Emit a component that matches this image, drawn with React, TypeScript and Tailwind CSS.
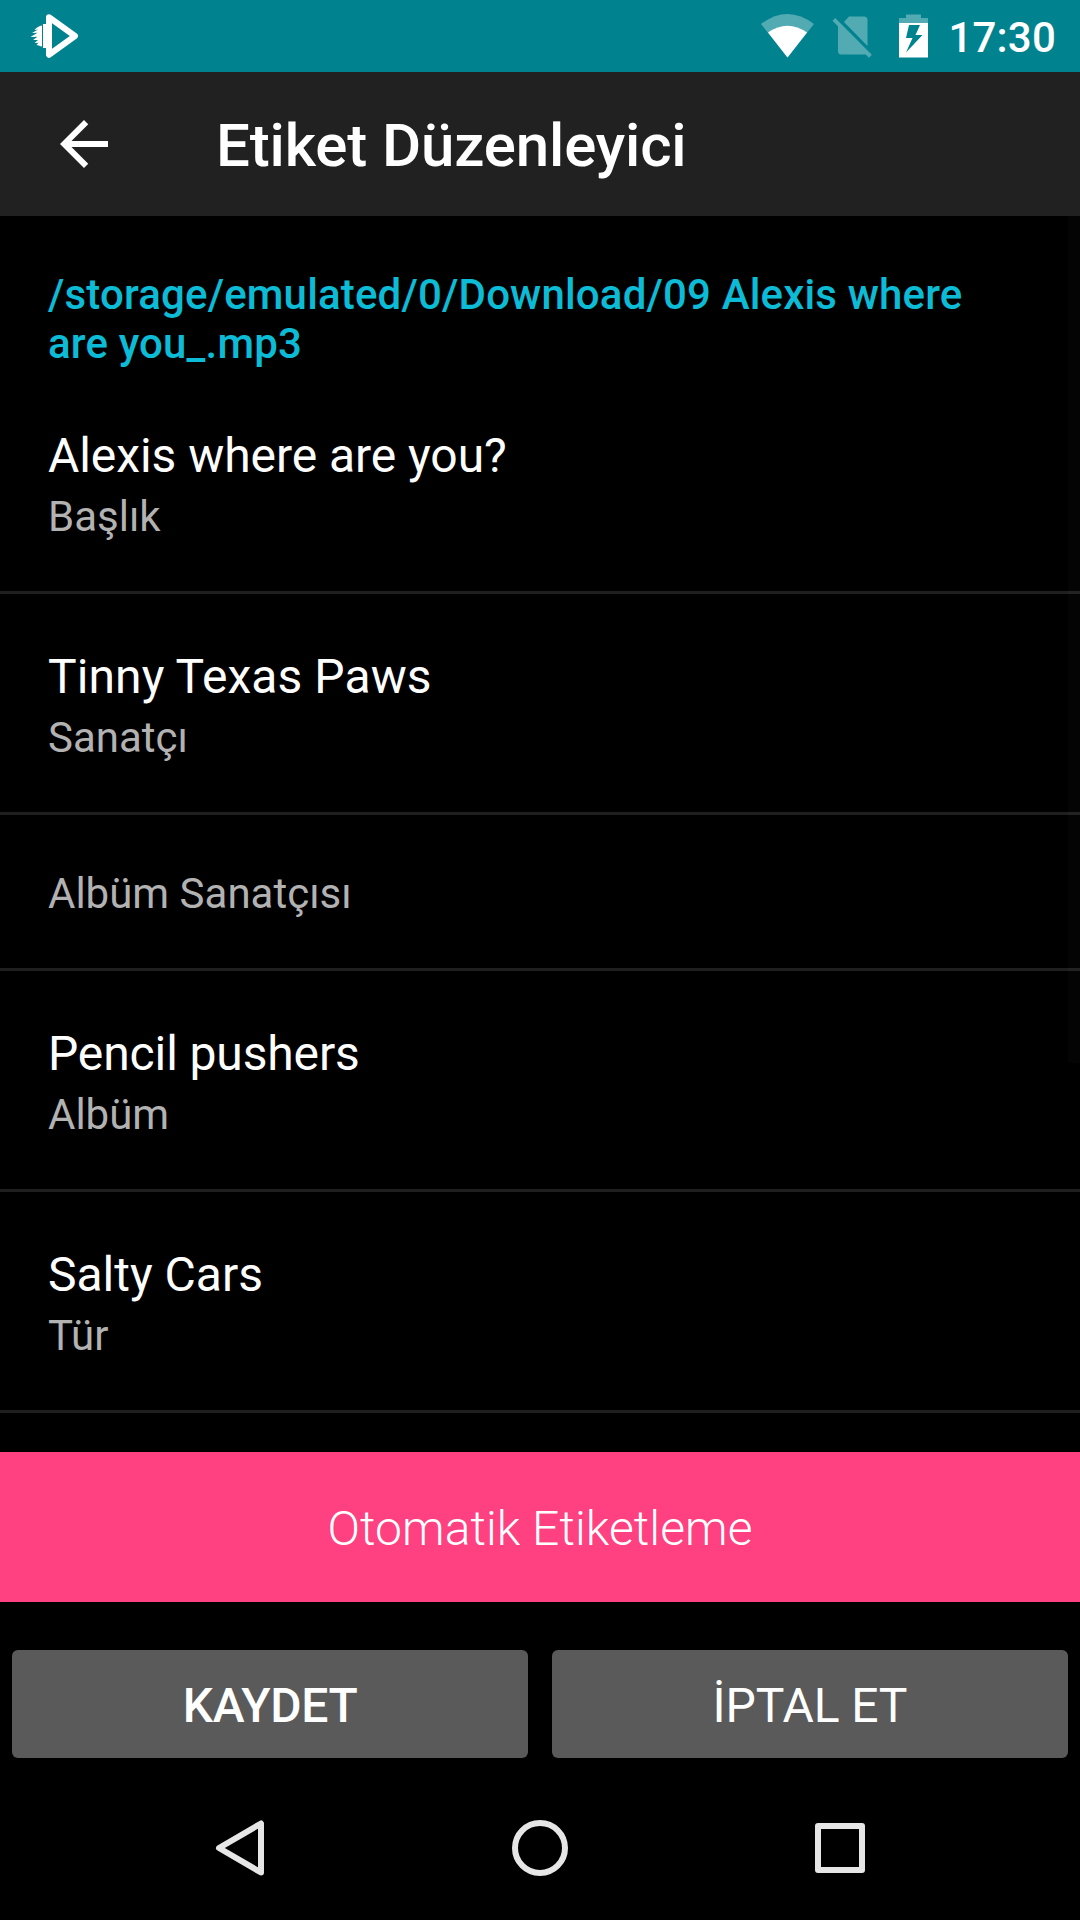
const fields = [
  { value: "Alexis where are you?", label: "Başlık", tracking: "tracking-[-0.06px]" },
  { value: "Tinny Texas Paws", label: "Sanatçı", tracking: "tracking-[0.08px]" },
  { value: "", label: "Albüm Sanatçısı", tracking: "" },
  { value: "Pencil pushers", label: "Albüm", tracking: "tracking-[-0.12px]" },
  { value: "Salty Cars", label: "Tür", tracking: "" },
];

function StatusBar() {
  return (
    <div className="flex h-[72px] shrink-0 items-center justify-between bg-[#00838f] pl-[30px] pr-6">
      <svg width="50" height="46" viewBox="30 13 50 46" fill="#fff">
        <path
          d="M49 17.2 L75 36 L49 54.8 Z"
          fill="none"
          stroke="#fff"
          strokeWidth="6"
          strokeLinejoin="round"
        />
        <path d="M43 24H47V48H43Z" />
        <path d="M42 25.500C39 25.700 36.500 27.500 34.500 30L38 29.500L32 33L37.500 32.800L30.500 37L37.500 36.800L33 40L38 40L34.500 43L38.500 42.800C37.500 43.800 37 44.500 36.500 45C38.500 45.200 40 46.200 42 46.500Z" />
      </svg>
      <div className="flex items-center">
        <svg width="190" height="56" viewBox="756 8 190 56" fill="#fff">
          <path d="M761 24Q787.500 4 814 24L787.500 57.500Z" opacity=".32" />
          <path d="M768 32.500Q787.500 19 807 32.500L787.500 57.500Z" />
          <g opacity=".32">
            <path d="M849 16.500H864Q867.500 16.500 867.500 20V46L844 22Z" />
            <path d="M838 24L868 54.500H841Q838 54.500 838 51Z" />
            <path d="M832.500 20.800L835.200 18L871.800 54.800L869 57.700Z" />
          </g>
          <path d="M906 14.500H921V18H928V23H899V18H906Z" opacity=".32" />
          <path
            fillRule="evenodd"
            d="M899 23H928V57.500H899ZM909 25L906 38H912.500L906 52.500L922.500 35H915.500L920 25Z"
          />
        </svg>
        <span className="ml-[2px] pt-0.5 text-[42px] leading-[49px] font-medium tracking-[0.2px] text-white">
          17:30
        </span>
      </div>
    </div>
  );
}

function Field({ value, label, tracking }: { value: string; label: string; tracking: string }) {
  return (
    <div className={`border-b-[3px] border-[#1f1f1f] px-12 pb-[50px] ${value ? "pt-[55px]" : "pt-[54px]"}`}>
      {value && <div className={`mb-2 text-[48px] leading-[56px] text-white ${tracking}`}>{value}</div>}
      <div className="text-[42px] leading-[49px] text-[#b2b2b2]">{label}</div>
    </div>
  );
}

export default function App() {
  return (
    <div className="flex h-[1920px] w-[1080px] flex-col overflow-hidden bg-black font-['Roboto',sans-serif]">
      <StatusBar />
      <header className="flex h-36 shrink-0 items-center bg-[#212121] pl-[60px]">
        <svg width="48" height="48" viewBox="4 4 16 16" fill="#fff">
          <path d="M20 11H7.830l5.590-5.590L12 4l-8 8 8 8 1.410-1.410L7.830 13H20v-2z" />
        </svg>
        <h1 className="ml-[108px] pt-1 text-[60px] leading-[70px] font-medium tracking-[-0.14px] text-white">
          Etiket Düzenleyici
        </h1>
      </header>
      <main className="relative h-[1236px] shrink-0 overflow-hidden">
        <p className="mt-[54px] mb-[5px] pr-20 pl-12 text-[42px] leading-[49px] font-medium tracking-[0.16px] text-[#0cbcd6]">
          /storage/emulated/0/Download/09 Alexis where are you_.mp3
        </p>
        {fields.map((f) => (
          <Field key={f.label} {...f} />
        ))}
        <div className="absolute top-0 right-0 h-[847px] w-3 bg-white/[0.016]" />
      </main>
      <button className="h-[150px] shrink-0 bg-[#ff4081] pt-[3px] text-[48px] leading-[56px] font-light tracking-[0.06px] text-white">
        Otomatik Etiketleme
      </button>
      <div className="mt-12 grid shrink-0 grid-cols-2 gap-6 px-3 text-[48px] leading-[56px] text-white">
        <button className="h-[108px] rounded-[6px] bg-[#5a5a5b] pt-1 font-medium tracking-[-0.4px]">KAYDET</button>
        <button className="h-[108px] rounded-[6px] bg-[#5a5a5b] pt-1 tracking-[-0.1px]">İPTAL ET</button>
      </div>
      <nav className="mt-[18px] flex h-36 shrink-0 items-center justify-center gap-[244px]">
        <svg width="56" height="56" viewBox="0 0 56 56" fill="none" stroke="#e6e6e6" strokeWidth="6" strokeLinejoin="round">
          <path d="M49 3.500V52.500L7 28Z" />
        </svg>
        <svg width="56" height="56" viewBox="0 0 56 56" fill="none" stroke="#e6e6e6" strokeWidth="6">
          <circle cx="28" cy="28" r="25" />
        </svg>
        <svg width="56" height="56" viewBox="0 0 56 56" fill="none" stroke="#e6e6e6" strokeWidth="6" strokeLinejoin="round">
          <path d="M6 6H50V50H6Z" />
        </svg>
      </nav>
    </div>
  );
}
